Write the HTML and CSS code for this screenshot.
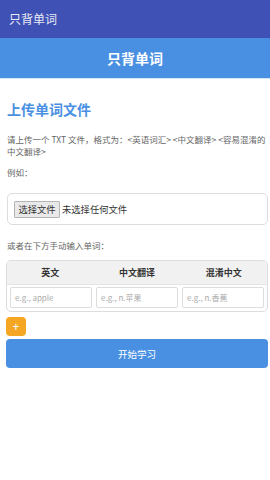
FILE: index.html
```html
<!DOCTYPE html>
<html lang="zh">
<head>
<meta charset="utf-8">
<title>只背单词</title>
<link rel="stylesheet" href="styles.css">
</head>
<body>
<div class="appbar">只背单词</div>
<header class="header">只背单词</header>
<main class="content">
  <h1 class="title">上传单词文件</h1>
  <p class="desc">请上传一个 TXT 文件，格式为：&lt;英语词汇&gt; &lt;中文翻译&gt; &lt;容易混淆的中文翻译&gt;</p>
  <p class="desc example">例如：</p>
  <div class="filebox">
    <span class="filebtn">选择文件</span>
    <span class="filename">未选择任何文件</span>
  </div>
  <p class="desc manual">或者在下方手动输入单词：</p>
  <div class="table">
    <div class="thead">
      <div class="th">英文</div>
      <div class="th">中文翻译</div>
      <div class="th">混淆中文</div>
    </div>
    <div class="trow">
      <input class="cell" type="text" placeholder="e.g., apple">
      <input class="cell" type="text" placeholder="e.g., n.苹果">
      <input class="cell" type="text" placeholder="e.g., n.香蕉">
    </div>
  </div>
  <button class="add">+</button>
  <button class="start">开始学习</button>
</main>
</body>
</html>
```
FILE: styles.css
```css
* { box-sizing: border-box; }
body {
  margin: 0;
  background: #fff;
  font-family: "Noto Sans CJK SC", "Noto Sans", sans-serif;
  color: #555;
}
.appbar {
  height: 38px;
  background: #3f51b5;
  color: #e8eaf6;
  font-size: 12px;
  line-height: 38px;
  padding-left: 9px;
}
.header {
  height: 41px;
  background: #4a90e2;
  color: #fff;
  font-size: 14px;
  font-weight: bold;
  line-height: 40px;
  text-align: center;
  border-bottom: 1px solid #d9e6f5;
}
.content {
  padding: 0 2px 0 6px;
}
.title {
  margin: 20px 0 0 1px;
  font-size: 14px;
  line-height: 20px;
  color: #4a90e2;
  font-weight: bold;
}
.desc {
  margin: 14px 0 0 1px;
  font-size: 8.5px;
  line-height: 12px;
  color: #666;
}
.example { margin-top: 9px; }
.filebox {
  margin: 15px 0 0 1px;
  height: 32px;
  border: 1px solid #ddd;
  border-radius: 5px;
  display: flex;
  align-items: center;
  padding-left: 6px;
  gap: 2px;
}
.filebtn {
  width: 46px;
  height: 17px;
  background: #e9e9e9;
  border: 1px solid #b5b5b5;
  border-radius: 1px;
  font-size: 9.3px;
  line-height: 15px;
  text-align: center;
  color: #333;
}
.filename {
  font-size: 9.3px;
  color: #333;
}
.manual { margin-top: 14px; }
.table {
  margin-top: 9px;
  border: 1px solid #ddd;
  border-radius: 5px;
  overflow: hidden;
}
.thead {
  display: grid;
  grid-template-columns: repeat(3, 1fr);
  height: 24px;
  background: #f1f1f1;
  border-bottom: 1px solid #e4e4e4;
}
.th {
  font-size: 9px;
  font-weight: bold;
  color: #333;
  text-align: center;
  line-height: 23px;
}
.trow {
  display: grid;
  grid-template-columns: repeat(3, 1fr);
  gap: 4px;
  padding: 2px 3px 3px;
}
.cell {
  width: 100%;
  height: 21px;
  border: 1px solid #ddd;
  border-radius: 2px;
  font-family: "Noto Sans CJK SC", "Noto Sans", sans-serif;
  font-size: 8px;
  padding: 0 4px;
  color: #333;
  outline: none;
}
.cell::placeholder { color: #aaa; }
.add {
  display: block;
  margin-top: 5px;
  width: 20px;
  height: 19px;
  border: none;
  border-radius: 4px;
  background: #f5a623;
  color: #fff;
  font-size: 12px;
  line-height: 19px;
  padding: 0;
  font-family: "Noto Sans", sans-serif;
}
.start {
  display: block;
  margin-top: 3px;
  width: 100%;
  height: 29px;
  border: none;
  border-radius: 4px;
  background: #4a90e2;
  color: #fff;
  font-size: 9.5px;
  font-family: "Noto Sans CJK SC", "Noto Sans", sans-serif;
  padding: 0;
}
```
